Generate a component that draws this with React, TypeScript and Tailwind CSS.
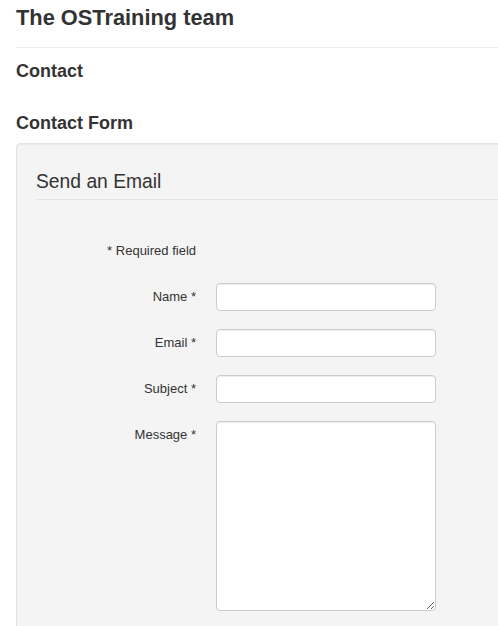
import React from "react";

const inputCls =
  "block w-[220px] h-[28px] bg-white border border-[#cccccc] rounded-[4px] shadow-[inset_0_1px_1px_rgba(0,0,0,0.075)] px-[6px] text-[13px] text-[#555] outline-none";

function Row({ label, children }: { label: string; children: React.ReactNode }) {
  return (
    <div className="flex mb-[18px]">
      <label className="w-[160px] shrink-0 text-right text-[13px] leading-[28px] text-[#333]">{label}</label>
      <div className="ml-[20px]">{children}</div>
    </div>
  );
}

export default function App() {
  return (
    <div
      className="w-[498px] h-[626px] overflow-hidden bg-white text-[#333]"
      style={{ fontFamily: '"Liberation Sans", Arial, Helvetica, sans-serif' }}
    >
      <div className="w-[560px] pl-4">
        <h2 className="pt-[4px] pb-[15px] text-[21.8px] leading-[28px] font-bold border-b border-[#eeeeee]">
          The OSTraining team
        </h2>
        <h3 className="mt-[12px] text-[18px] leading-[22px] font-bold">Contact</h3>
        <h3 className="mt-[30px] text-[18px] leading-[22px] font-bold">Contact Form</h3>
        <div className="mt-[9px] h-[600px] bg-[#f4f4f4] border border-[#e3e3e3] rounded-[4px] shadow-[inset_0_1px_1px_rgba(0,0,0,0.05)] pt-[20px] pl-[19px]">
          <div className="text-[19.3px] leading-[35px] text-[#333] border-b border-[#e5e5e5]">Send an Email</div>
          <div className="mt-[37px]">
            <div className="flex mb-[18px]">
              <div className="w-[160px] text-right text-[13px] leading-[28px]">* Required field</div>
            </div>
            <Row label="Name *">
              <input className={inputCls} type="text" />
            </Row>
            <Row label="Email *">
              <input className={inputCls} type="email" />
            </Row>
            <Row label="Subject *">
              <input className={inputCls} type="text" />
            </Row>
            <Row label="Message *">
              <textarea className="block w-[220px] h-[190px] bg-white border border-[#cccccc] rounded-[4px] shadow-[inset_0_1px_1px_rgba(0,0,0,0.075)] px-[6px] py-[4px] text-[13px] outline-none" />
            </Row>
          </div>
        </div>
      </div>
    </div>
  );
}
